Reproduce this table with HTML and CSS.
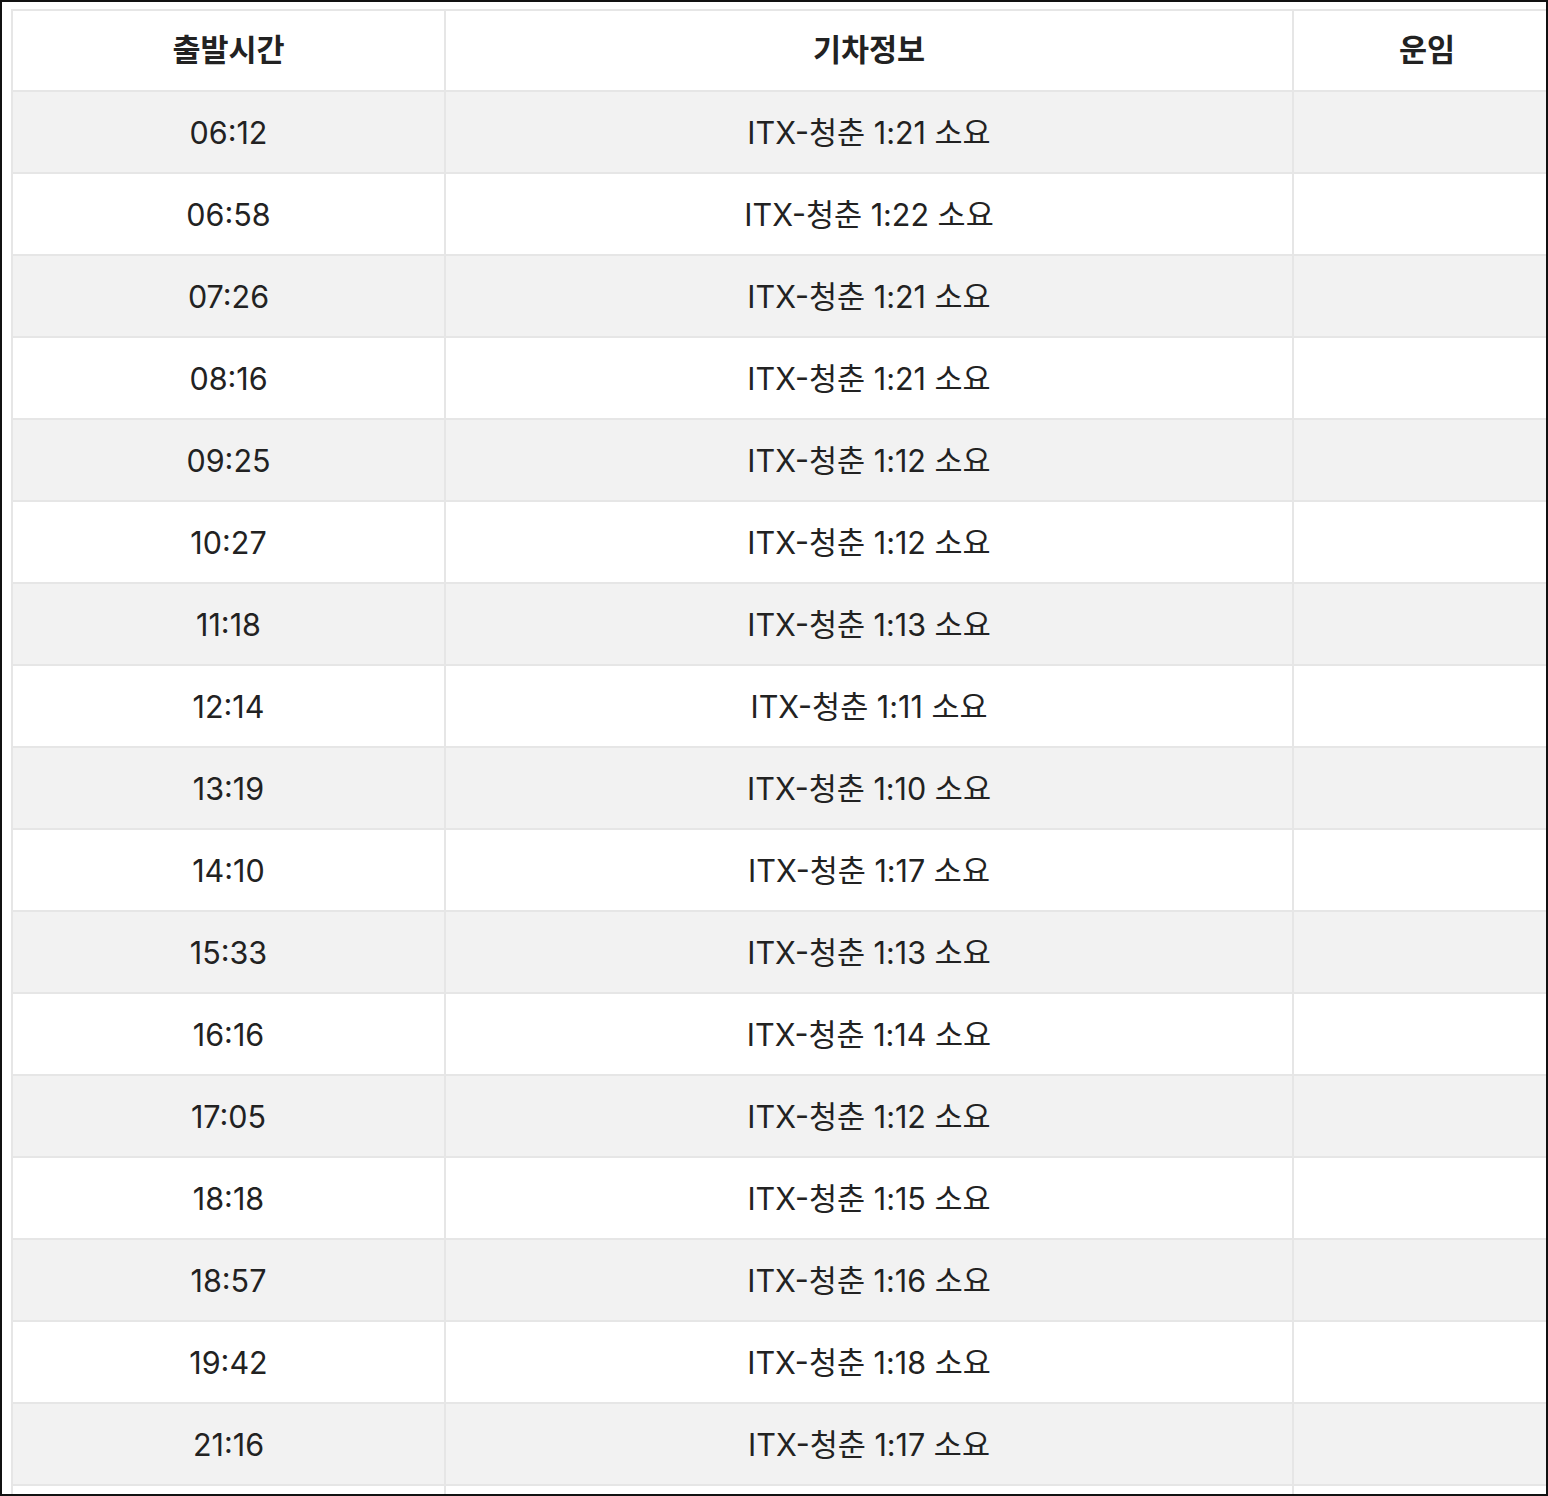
FILE: index.html
```html
<!DOCTYPE html>
<html lang="ko">
<head>
<meta charset="utf-8">
<title>시간표</title>
<link rel="stylesheet" href="styles.css">
</head>
<body>
<div class="frame">
  <table class="timetable">
    <colgroup>
      <col class="c-time">
      <col class="c-info">
      <col class="c-fare">
    </colgroup>
    <thead>
      <tr><th>출발시간</th><th>기차정보</th><th>운임</th></tr>
    </thead>
    <tbody>
      <tr><td>06:12</td><td>ITX-청춘 1:21 소요</td><td></td></tr>
      <tr><td>06:58</td><td>ITX-청춘 1:22 소요</td><td></td></tr>
      <tr><td>07:26</td><td>ITX-청춘 1:21 소요</td><td></td></tr>
      <tr><td>08:16</td><td>ITX-청춘 1:21 소요</td><td></td></tr>
      <tr><td>09:25</td><td>ITX-청춘 1:12 소요</td><td></td></tr>
      <tr><td>10:27</td><td>ITX-청춘 1:12 소요</td><td></td></tr>
      <tr><td>11:18</td><td>ITX-청춘 1:13 소요</td><td></td></tr>
      <tr><td>12:14</td><td>ITX-청춘 1:11 소요</td><td></td></tr>
      <tr><td>13:19</td><td>ITX-청춘 1:10 소요</td><td></td></tr>
      <tr><td>14:10</td><td>ITX-청춘 1:17 소요</td><td></td></tr>
      <tr><td>15:33</td><td>ITX-청춘 1:13 소요</td><td></td></tr>
      <tr><td>16:16</td><td>ITX-청춘 1:14 소요</td><td></td></tr>
      <tr><td>17:05</td><td>ITX-청춘 1:12 소요</td><td></td></tr>
      <tr><td>18:18</td><td>ITX-청춘 1:15 소요</td><td></td></tr>
      <tr><td>18:57</td><td>ITX-청춘 1:16 소요</td><td></td></tr>
      <tr><td>19:42</td><td>ITX-청춘 1:18 소요</td><td></td></tr>
      <tr><td>21:16</td><td>ITX-청춘 1:17 소요</td><td></td></tr>
      <tr><td></td><td></td><td></td></tr>
    </tbody>
  </table>
</div>
</body>
</html>
```

FILE: styles.css
```css
html, body {
  margin: 0;
  padding: 0;
  background: #ffffff;
}

.frame {
  width: 1548px;
  height: 1496px;
  box-sizing: border-box;
  border: 2px solid #111111;
  padding: 7px 0 0 9px;
  overflow: hidden;
  background: #ffffff;
}

.timetable {
  table-layout: fixed;
  width: 1551px;
  border-collapse: separate;
  border-spacing: 0;
  border-top: 2px solid #e6e6e6;
  border-left: 2px solid #e6e6e6;
  font-family: Inter, "Noto Sans CJK KR", sans-serif;
  color: #222222;
}

.c-time { width: 433px; }
.c-info { width: 848px; }
.c-fare { width: 268px; }

.timetable th,
.timetable td {
  padding: 0;
  text-align: center;
  vertical-align: middle;
  border-right: 2px solid #e6e6e6;
  border-bottom: 2px solid #e6e6e6;
  font-size: 30.5px;
  line-height: 1.2;
}

.timetable th {
  height: 79px;
  font-weight: 700;
  background: #ffffff;
}

.timetable td {
  box-sizing: border-box;
  height: 82px;
  padding-top: 2px;
  font-weight: 400;
}

.timetable tbody tr:nth-child(odd) td {
  background: #f2f2f2;
}

.timetable tbody tr:nth-child(even) td {
  background: #ffffff;
}
```
